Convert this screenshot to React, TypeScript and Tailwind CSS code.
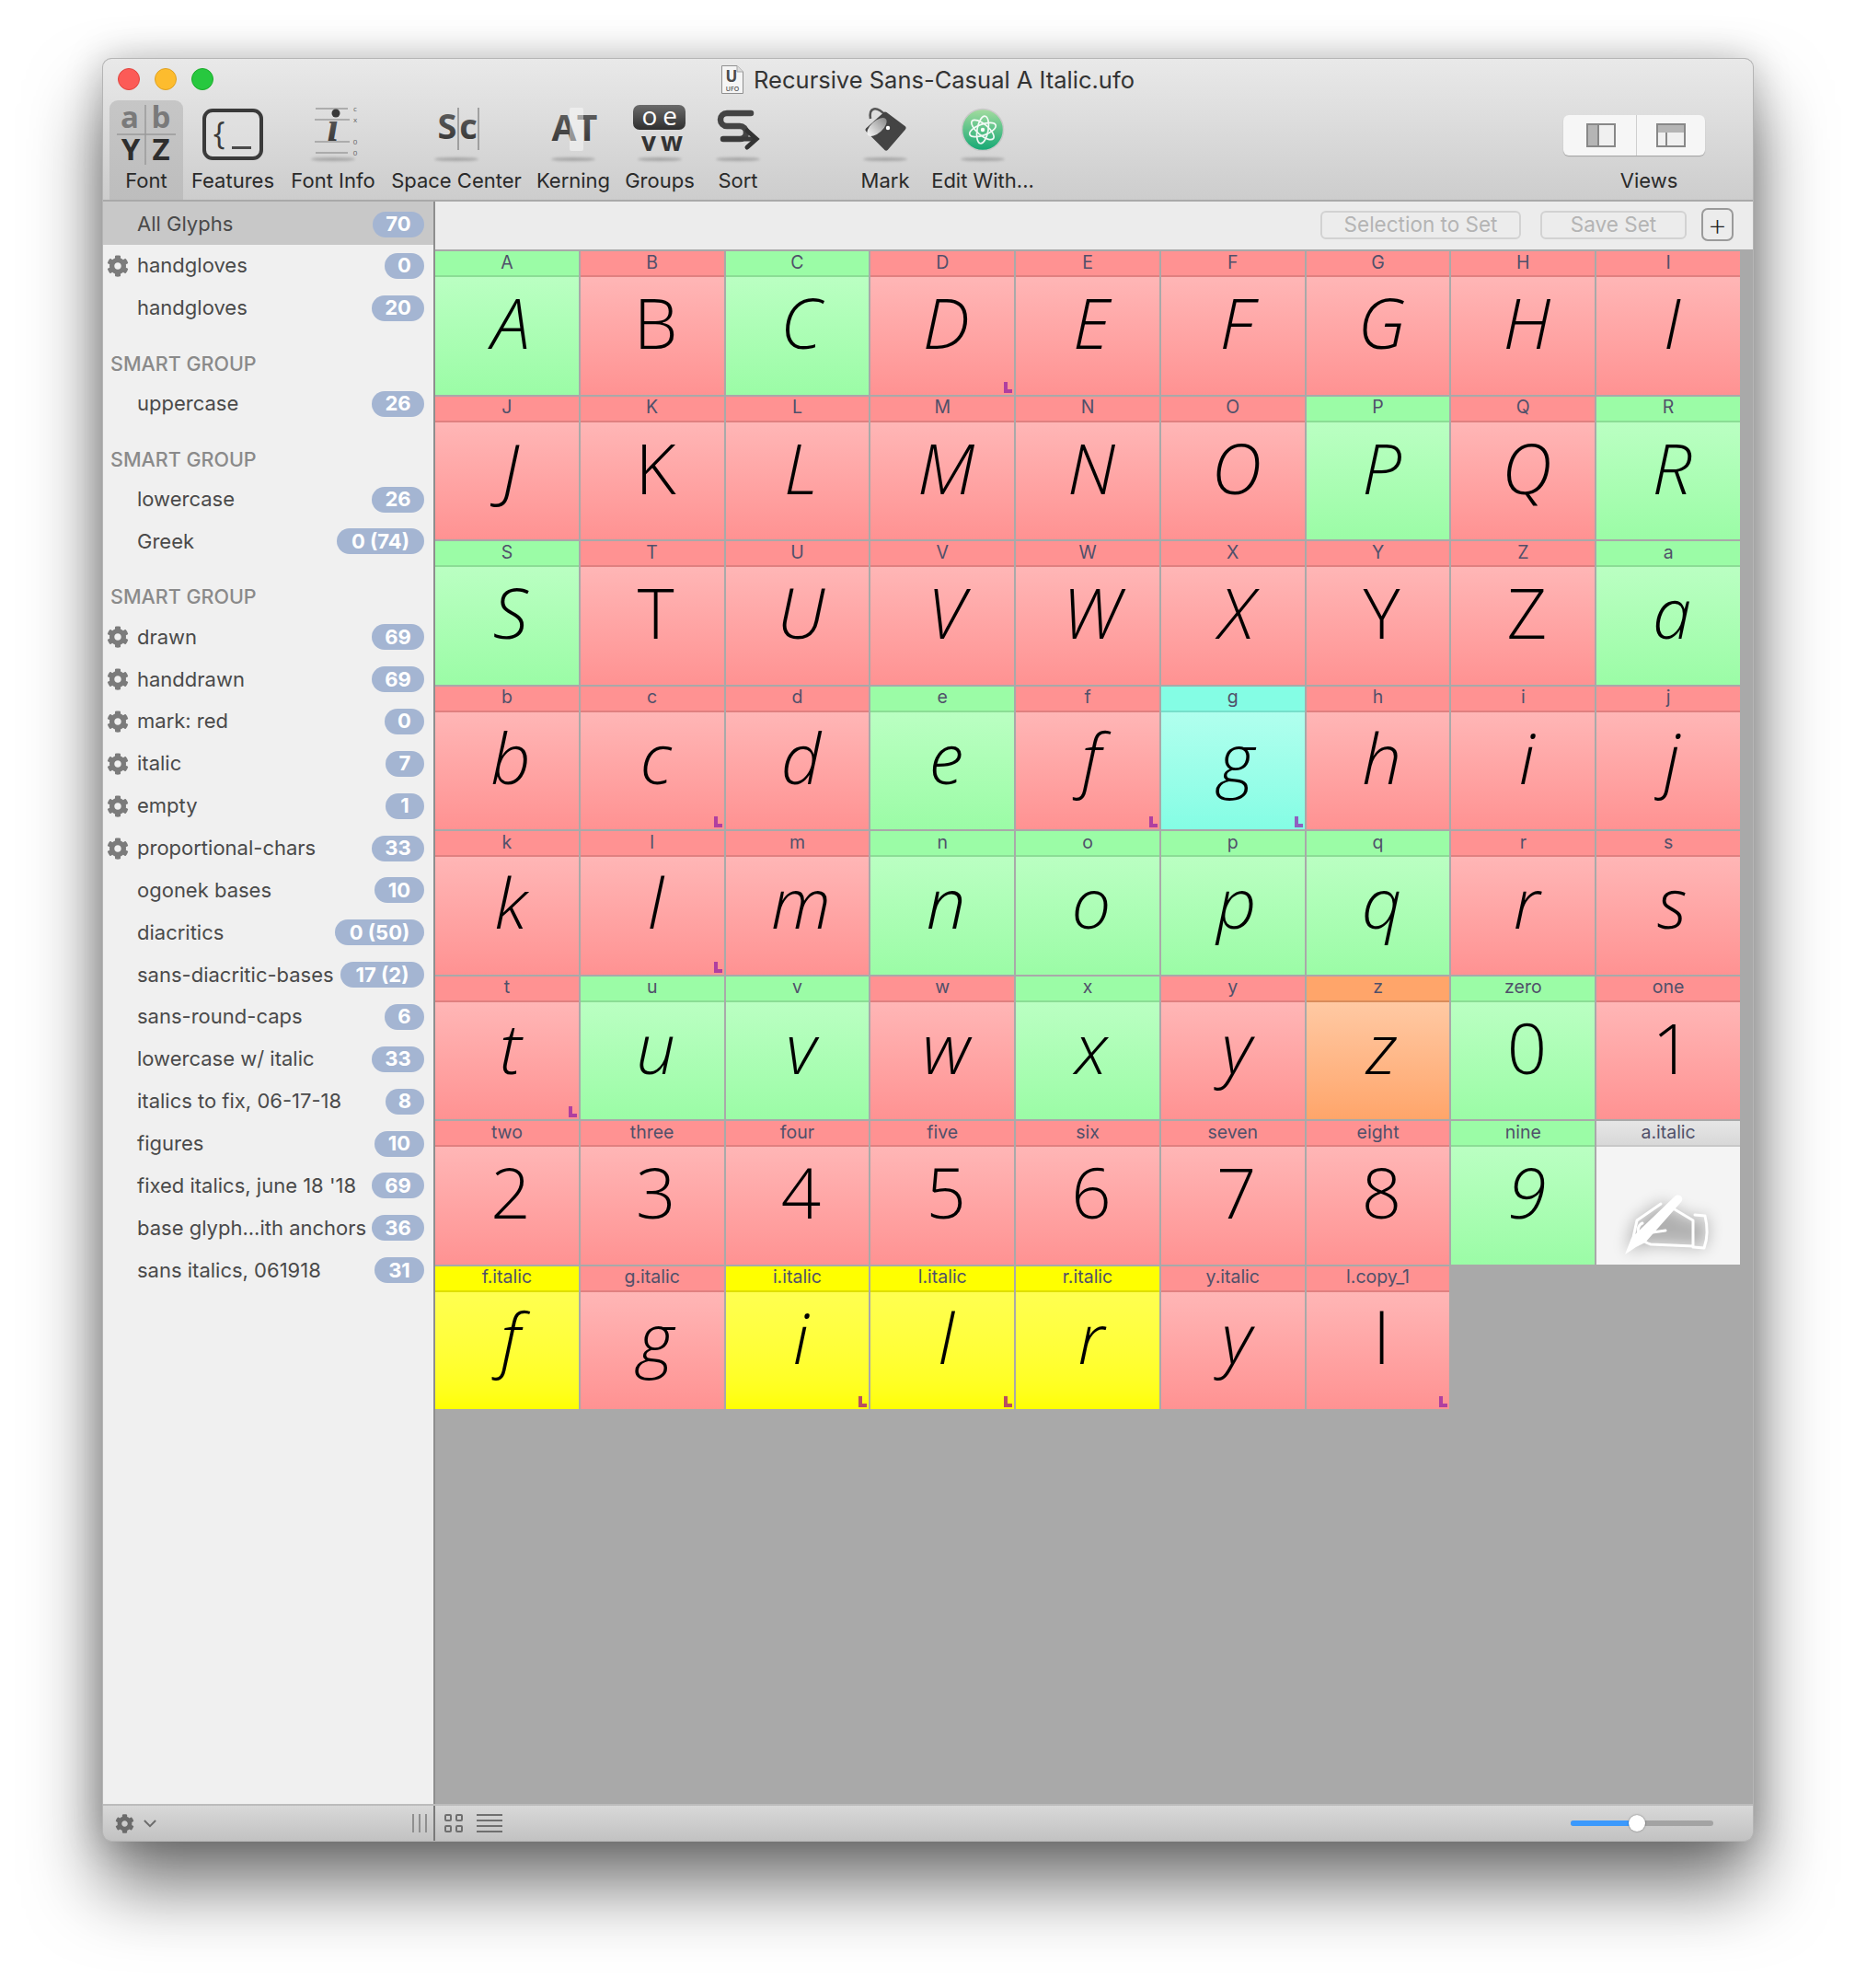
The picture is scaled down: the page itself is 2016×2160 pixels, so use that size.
import { FaCog } from "react-icons/fa";

type Mark = "red" | "green" | "cyan" | "orange" | "yellow" | "empty";

type Glyph = {
  name: string;
  char?: string;
  mark: Mark;
  upright?: boolean;
  corner?: boolean;
};

const g = (
  name: string,
  mark: Mark = "red",
  opts: { char?: string; upright?: boolean; corner?: boolean } = {}
): Glyph => ({ name, char: opts.char ?? name, mark, upright: opts.upright, corner: opts.corner });

const glyphs: Glyph[] = [
  g("A", "green"), g("B", "red", { upright: true }), g("C", "green"), g("D", "red", { corner: true }), g("E"), g("F"), g("G"), g("H"), g("I"),
  g("J"), g("K", "red", { upright: true }), g("L"), g("M"), g("N"), g("O"), g("P", "green"), g("Q"), g("R", "green"),
  g("S", "green"), g("T", "red", { upright: true }), g("U"), g("V"), g("W"), g("X"), g("Y", "red", { upright: true }), g("Z", "red", { upright: true }), g("a", "green"),
  g("b"), g("c", "red", { corner: true }), g("d"), g("e", "green"), g("f", "red", { corner: true }), g("g", "cyan", { corner: true }), g("h"), g("i"), g("j"),
  g("k"), g("l", "red", { corner: true }), g("m"), g("n", "green"), g("o", "green"), g("p", "green"), g("q", "green"), g("r"), g("s"),
  g("t", "red", { corner: true }), g("u", "green"), g("v", "green"), g("w"), g("x", "green"), g("y"), g("z", "orange"), g("zero", "green", { char: "0", upright: true }), g("one", "red", { char: "1", upright: true }),
  g("two", "red", { char: "2", upright: true }), g("three", "red", { char: "3", upright: true }), g("four", "red", { char: "4", upright: true }), g("five", "red", { char: "5", upright: true }), g("six", "red", { char: "6", upright: true }), g("seven", "red", { char: "7", upright: true }), g("eight", "red", { char: "8", upright: true }), g("nine", "green", { char: "9" }), g("a.italic", "empty", { char: "" }),
  g("f.italic", "yellow", { char: "f" }), g("g.italic", "red", { char: "g" }), g("i.italic", "yellow", { char: "i", corner: true }), g("l.italic", "yellow", { char: "l", corner: true }), g("r.italic", "yellow", { char: "r" }), g("y.italic", "red", { char: "y" }), g("l.copy_1", "red", { char: "l", upright: true, corner: true }),
];

const labelColor: Record<Mark, string> = {
  red: "bg-[#ff9292] border-[#e08080]",
  green: "bg-[#9bfca6] border-[#8bdd95]",
  cyan: "bg-[#84fde4] border-[#77dfcb]",
  orange: "bg-[#ffa56a] border-[#d98c5a]",
  yellow: "bg-[#ffff00] border-[#dfdf00]",
  empty: "bg-gradient-to-b from-[#e6e6e6] to-[#d8d8d8] border-[#c8c8c8]",
};

const bodyColor: Record<Mark, string> = {
  red: "bg-gradient-to-b from-[#ffb6b6] to-[#ff9292]",
  green: "bg-gradient-to-b from-[#baffc2] to-[#9bfca6]",
  cyan: "bg-gradient-to-b from-[#b0ffee] to-[#84fde4]",
  orange: "bg-gradient-to-b from-[#ffc9a3] to-[#ffa56a]",
  yellow: "bg-gradient-to-b from-[#ffff50] to-[#ffff00]",
  empty: "bg-[#f4f4f4]",
};

const cornerColor: Record<Mark, string> = {
  red: "border-[#b03fa0]",
  green: "border-[#8f5fc0]",
  cyan: "border-[#8f5fc0]",
  orange: "border-[#b03fa0]",
  yellow: "border-[#b84f60]",
  empty: "border-[#b03fa0]",
};

type SideRow =
  | { kind: "head" }
  | { label: string; badge: string; w: string; gear?: boolean; kind?: undefined };

const sideRows: SideRow[] = [
  { label: "handgloves", badge: "0", w: "w-[43px]", gear: true },
  { label: "handgloves", badge: "20", w: "w-[57px]" },
  { kind: "head" },
  { label: "uppercase", badge: "26", w: "w-[57px]" },
  { kind: "head" },
  { label: "lowercase", badge: "26", w: "w-[57px]" },
  { label: "Greek", badge: "0 (74)", w: "w-[95px]" },
  { kind: "head" },
  { label: "drawn", badge: "69", w: "w-[57px]", gear: true },
  { label: "handdrawn", badge: "69", w: "w-[57px]", gear: true },
  { label: "mark: red", badge: "0", w: "w-[43px]", gear: true },
  { label: "italic", badge: "7", w: "w-[42px]", gear: true },
  { label: "empty", badge: "1", w: "w-[42px]", gear: true },
  { label: "proportional-chars", badge: "33", w: "w-[57px]", gear: true },
  { label: "ogonek bases", badge: "10", w: "w-[54px]" },
  { label: "diacritics", badge: "0 (50)", w: "w-[97px]" },
  { label: "sans-diacritic-bases", badge: "17 (2)", w: "w-[91px]" },
  { label: "sans-round-caps", badge: "6", w: "w-[43px]" },
  { label: "lowercase w/ italic", badge: "33", w: "w-[57px]" },
  { label: "italics to fix, 06-17-18", badge: "8", w: "w-[42px]" },
  { label: "figures", badge: "10", w: "w-[54px]" },
  { label: "fixed italics, june 18 '18", badge: "69", w: "w-[57px]" },
  { label: "base glyph...ith anchors", badge: "36", w: "w-[57px]" },
  { label: "sans italics, 061918", badge: "31", w: "w-[54px]" },
];

const iconFont = "'Open Sans', sans-serif";

function Shade({ x = 40 }: { x?: number }) {
  return <ellipse cx={x} cy={64} rx={24} ry={2} fill="#000" opacity={0.22} filter="url(#soft)" />;
}

function Defs() {
  return (
    <svg width="0" height="0" className="absolute">
      <defs>
        <filter id="soft" x="-30%" y="-200%" width="160%" height="500%">
          <feGaussianBlur stdDeviation="1.4" />
        </filter>
        <filter id="wide" x="-40%" y="-40%" width="180%" height="180%">
          <feGaussianBlur stdDeviation="9" />
        </filter>
        <linearGradient id="ink" x1="0" y1="0" x2="0" y2="1">
          <stop offset="0" stopColor="#6b6b6b" />
          <stop offset="1" stopColor="#2e2e2e" />
        </linearGradient>
        <linearGradient id="atom" x1="0" y1="0" x2="0" y2="1">
          <stop offset="0" stopColor="#a4dc9f" />
          <stop offset="1" stopColor="#14a874" />
        </linearGradient>
        <linearGradient id="pail" x1="0" y1="0" x2="1" y2="0">
          <stop offset="0" stopColor="#f4f4f4" />
          <stop offset="1" stopColor="#8c8c8c" />
        </linearGradient>
      </defs>
    </svg>
  );
}

function Ico({ children }: { children: React.ReactNode }) {
  return (
    <svg viewBox="0 0 80 72" className="h-[72px] w-[80px] shrink-0 overflow-visible" style={{ fontFamily: iconFont }}>
      {children}
    </svg>
  );
}

function FontIcon() {
  return (
    <Ico>
      <path d="M39 5V70M8 37H72" stroke="#9a9a9a" strokeWidth="1.5" />
      <text x="22" y="30" textAnchor="middle" fontSize="33" fontWeight="700" fill="#7a7a7a">a</text>
      <text x="56" y="30" textAnchor="middle" fontSize="33" fontWeight="700" fill="#7a7a7a">b</text>
      <text x="23" y="65" textAnchor="middle" fontSize="33" fontWeight="700" fill="#2e2e2e">Y</text>
      <text x="56" y="65" textAnchor="middle" fontSize="33" fontWeight="700" fill="#2e2e2e">Z</text>
    </Ico>
  );
}

function FeaturesIcon() {
  return (
    <Ico>
      <rect x="9" y="11" width="62" height="52" rx="9" fill="#e4e4e4" fillOpacity="0.5" stroke="#3a3a3a" strokeWidth="4" />
      <text x="25" y="48" textAnchor="middle" fontSize="34" fill="#3a3a3a">{"{"}</text>
      <rect x="39" y="50" width="21" height="3" fill="#4a4a4a" />
    </Ico>
  );
}

function InfoIcon() {
  return (
    <Ico>
      <path d="M21 9H56M20 21H58M20 45H58M21 57H56" stroke="#9d9d9d" strokeWidth="1.5" />
      <circle cx="43" cy="14" r="4.5" fill="#3a3a3a" />
      <text x="40" y="44" textAnchor="middle" fontSize="46" fontWeight="700" fontStyle="italic" fill="url(#ink)" style={{ fontFamily: "'Liberation Serif', serif" }}>ı</text>
      <text x="64" y="12" textAnchor="middle" fontSize="8" fill="#666">c</text>
      <text x="64" y="24" textAnchor="middle" fontSize="8" fill="#666">x</text>
      <text x="64" y="48" textAnchor="middle" fontSize="8" fill="#666">0</text>
      <text x="64" y="60" textAnchor="middle" fontSize="8" fill="#666">0</text>
      <Shade />
    </Ico>
  );
}

function SpaceIcon() {
  return (
    <Ico>
      <text x="30" y="42" textAnchor="middle" fontSize="38" fontWeight="700" fill="url(#ink)">S</text>
      <text x="53" y="42" textAnchor="middle" fontSize="38" fontWeight="700" fill="url(#ink)">c</text>
      <path d="M42 8V54M64 8V54" stroke="#8c8c8c" strokeWidth="1.5" />
      <Shade />
    </Ico>
  );
}

function KerningIcon() {
  return (
    <Ico>
      <text x="30" y="44" textAnchor="middle" fontSize="39" fontWeight="700" fill="url(#ink)">A</text>
      <text x="55" y="44" textAnchor="middle" fontSize="39" fontWeight="700" fill="url(#ink)">T</text>
      <rect x="36" y="8" width="15" height="47" rx="2" fill="#fff" opacity="0.45" />
      <Shade />
    </Ico>
  );
}

function GroupsIcon() {
  return (
    <Ico>
      <rect x="11" y="5" width="57" height="27" rx="7" fill="url(#ink)" />
      <text x="29" y="27" textAnchor="middle" fontSize="28" fill="#fff">o</text>
      <text x="51" y="27" textAnchor="middle" fontSize="28" fill="#fff">e</text>
      <text x="28" y="55" textAnchor="middle" fontSize="28" fontWeight="700" fill="#333">v</text>
      <text x="53" y="55" textAnchor="middle" fontSize="28" fontWeight="700" fill="#333">w</text>
      <Shade />
    </Ico>
  );
}

function SortIcon() {
  return (
    <Ico>
      <path
        d="M54 14H28A7 7 0 0 0 28 28H42A7 7 0 0 1 42 42H24"
        fill="none"
        stroke="#444"
        strokeWidth="6.5"
        strokeLinecap="round"
      />
      <path d="M24 42H56" fill="none" stroke="#3a3a3a" strokeWidth="5" strokeLinecap="round" />
      <path d="M50 33L60 42L50 51" fill="none" stroke="#333" strokeWidth="5" strokeLinecap="round" />
      <Shade />
    </Ico>
  );
}

function MarkIcon() {
  return (
    <Ico>
      <path d="M24 20C22 8 30 5 41 17" fill="none" stroke="#555" strokeWidth="2.5" />
      <path d="M21 32L40 15L60 30L41 52Z" fill="#444" stroke="#444" strokeWidth="5" strokeLinejoin="round" />
      <ellipse cx="31" cy="29" rx="13" ry="6.5" transform="rotate(-42 31 29)" fill="url(#pail)" />
      <circle cx="43" cy="30" r="2.2" fill="#fff" />
      <Shade />
    </Ico>
  );
}

function AtomIcon() {
  return (
    <Ico>
      <circle cx="40" cy="32" r="22.5" fill="url(#atom)" stroke="#c9c9c9" strokeWidth="1.5" />
      <g fill="none" stroke="#fff" strokeWidth="1.7" opacity="0.92">
        <ellipse cx="40" cy="32" rx="15" ry="6" transform="rotate(-20 40 32)" />
        <ellipse cx="40" cy="32" rx="15" ry="6" transform="rotate(40 40 32)" />
        <ellipse cx="40" cy="32" rx="15" ry="6" transform="rotate(100 40 32)" />
      </g>
      <circle cx="40" cy="32" r="2.2" fill="#fff" />
      <Shade />
    </Ico>
  );
}

function UfoFile() {
  return (
    <svg viewBox="0 0 24 31" className="mr-[11px] h-[31px] w-[24px] shrink-0 overflow-visible" style={{ fontFamily: iconFont }}>
      <path d="M.5.5H17L23.5 7V30.5H.5Z" fill="#f5f5f5" stroke="#8f8f8f" />
      <path d="M17 .5V7H23.5" fill="#dcdcdc" stroke="#a5a5a5" />
      <text x="11" y="18" textAnchor="middle" fontSize="17" fontWeight="700" fill="#4a4a4a">U</text>
      <text x="12" y="28" textAnchor="middle" fontSize="7" fontWeight="600" fill="#555">UFO</text>
    </svg>
  );
}

function ToolItem({ label, w, active, children }: { label: string; w: string; active?: boolean; children: React.ReactNode }) {
  return (
    <div className={`flex h-full shrink-0 flex-col items-center rounded-t-[9px] ${w} ${active ? "bg-gradient-to-b from-[#c6c6c6] to-[#bdbdbd]" : ""}`}>
      <div className="flex h-[72px] items-center justify-center">{children}</div>
      <span className="mt-[2px] whitespace-nowrap text-[22px] leading-[26px] text-[#2a2a2a]">{label}</span>
    </div>
  );
}

function PenHand() {
  const d =
    "M8 66L17 34L45 14L60 21L80 32L94 27C96 40 96 52 92 63L80 61L33 59L8 66Z";
  return (
    <svg viewBox="0 0 100 80" className="absolute left-[25px] top-[47px] h-[80px] w-[100px] overflow-visible">
      <path d={d} fill="#000" opacity="0.28" filter="url(#wide)" />
      <g fill="none" stroke="#fff" strokeWidth="3" strokeLinejoin="round" strokeLinecap="round">
        <path d="M14 56L19 33L45 15M60 21L80 33L80 61L34 59C30 58 27 56 25 53" />
        <path d="M82 27L93 28C96 40 96 52 92 63L80 62" />
        <path d="M24 52C18 46 20 38 25 36M36 46L50 44" />
      </g>
      <path d="M6 70L13 52L60 7C65 3 71 8 67 13L28 57L18 62Z" fill="#fff" />
    </svg>
  );
}

function Cell({ glyph }: { glyph: Glyph }) {
  return (
    <div className="flex h-[155.5px] min-w-0 flex-col">
      <div className={`flex h-[28px] shrink-0 items-center justify-center border-b-2 pb-px text-[19.5px] leading-none text-[#50506a] ${labelColor[glyph.mark]}`}>
        {glyph.name}
      </div>
      <div className={`relative flex-1 ${bodyColor[glyph.mark]}`}>
        {glyph.char ? (
          <span
            className={`absolute inset-x-0 top-0 h-[98px] pl-[8px] text-center text-[76px] font-light leading-[98px] text-black ${glyph.upright ? "" : "italic"}`}
            style={{ fontFamily: "'Open Sans', sans-serif" }}
          >
            {glyph.char}
          </span>
        ) : (
          <PenHand />
        )}
        {glyph.corner && (
          <span className={`absolute bottom-[2px] right-[2px] h-[12px] w-[9px] border-b-[4px] border-l-[4px] ${cornerColor[glyph.mark]}`} />
        )}
      </div>
    </div>
  );
}

function Sidebar() {
  return (
    <aside className="flex w-[361px] shrink-0 flex-col border-r-2 border-[#8e8e8e] bg-[#f0f0f0]">
      <div className="flex h-[47px] shrink-0 items-center bg-[#c8c8c8] pl-[37px] pr-[10px] pt-[2px] text-[#4a4a4a]">
        <span className="flex-1 text-[22px]">All Glyphs</span>
        <span className="flex h-[28px] w-[56px] items-center justify-center rounded-full bg-[#a4b5d2] text-[22px] font-bold text-white">70</span>
      </div>
      {sideRows.map((row, i) =>
        row.kind === "head" ? (
          <div key={i} className="flex h-[58px] shrink-0 items-end pb-[9px] pl-[8px] text-[21.5px] font-medium leading-[24px] text-[#8a8a8a]">
            SMART GROUP
          </div>
        ) : (
          <div key={i} className="relative flex h-[45.87px] shrink-0 items-center pl-[37px] pr-[10px] text-[#4a4a4a]">
            {row.gear && <FaCog className="absolute left-[4px] top-[11px] h-[24px] w-[24px] text-[#7b7b7b]" />}
            <span className="flex-1 whitespace-nowrap text-[22px]">{row.label}</span>
            <span className={`flex h-[28px] items-center justify-center rounded-full bg-[#a4b5d2] text-[22px] font-bold text-white ${row.w}`}>{row.badge}</span>
          </div>
        )
      )}
    </aside>
  );
}

export default function App() {
  return (
    <div className="h-[2160px] w-[2016px] overflow-hidden bg-white pl-[111px] pt-[63px]" style={{ fontFamily: "Inter, sans-serif" }}>
      <Defs />
      <div className="flex h-[1938px] w-[1795px] flex-col overflow-hidden rounded-[10px] border border-[#b5b5b5] bg-[#a9a9a9] shadow-[0_48px_80px_rgba(0,0,0,0.55),0_0_40px_rgba(0,0,0,0.22)]">
        <header className="h-[155px] shrink-0 border-b-2 border-[#a9a9a9] bg-gradient-to-b from-[#e9e9e9] to-[#cdcdcd]">
          <div className="relative flex h-[45px] items-center justify-center">
            <div className="absolute left-[16px] top-[10px] flex gap-[16px]">
              <span className="h-[24px] w-[24px] rounded-full border border-[#e0443e] bg-[#fc5b57]" />
              <span className="h-[24px] w-[24px] rounded-full border border-[#dea123] bg-[#fdbc2e]" />
              <span className="h-[24px] w-[24px] rounded-full border border-[#1aab29] bg-[#27c83f]" />
            </div>
            <UfoFile />
            <span className="text-[25.5px] leading-[30px] text-[#333]">Recursive Sans-Casual A Italic.ufo</span>
          </div>
          <div className="flex h-[108px] pl-[7px]">
            <ToolItem label="Font" w="w-[80px]" active><FontIcon /></ToolItem>
            <ToolItem label="Features" w="w-[108px]"><FeaturesIcon /></ToolItem>
            <ToolItem label="Font Info" w="w-[110px]"><InfoIcon /></ToolItem>
            <ToolItem label="Space Center" w="w-[158px]"><SpaceIcon /></ToolItem>
            <ToolItem label="Kerning" w="w-[96px]"><KerningIcon /></ToolItem>
            <ToolItem label="Groups" w="w-[92px]"><GroupsIcon /></ToolItem>
            <ToolItem label="Sort" w="w-[78px]"><SortIcon /></ToolItem>
            <div className="w-[79px] shrink-0" />
            <ToolItem label="Mark" w="w-[84px]"><MarkIcon /></ToolItem>
            <ToolItem label="Edit With..." w="w-[128px]"><AtomIcon /></ToolItem>
            <div className="flex-1" />
            <div className="mr-[12px] flex w-[202px] shrink-0 flex-col items-center">
              <div className="mt-[16px] flex h-[44px] w-[154px] -translate-x-[16px] rounded-[6px] bg-[#f6f6f6] shadow-[0_1px_1px_rgba(0,0,0,0.25)]">
                <div className="flex flex-1 items-center justify-center border-r border-[#cfcfcf] pl-[4px]">
                  <div className="flex h-[26px] w-[32px] border-2 border-[#888] bg-[#f0f0f0]">
                    <div className="h-full w-[10px] bg-[#b5b5b5]" />
                    <div className="h-full w-[2px] bg-[#888]" />
                  </div>
                </div>
                <div className="flex flex-1 items-center justify-center">
                  <div className="flex h-[26px] w-[32px] flex-col border-2 border-[#888] bg-[#f0f0f0]">
                    <div className="h-[8px] w-full shrink-0 bg-[#b5b5b5]" />
                    <div className="ml-[8px] h-full w-[2px] bg-[#888]" />
                  </div>
                </div>
              </div>
              <span className="mt-[14px] text-[22px] leading-[26px] text-[#2a2a2a]">Views</span>
            </div>
          </div>
        </header>

        <div className="flex min-h-0 flex-1">
          <Sidebar />
          <div className="flex min-w-0 flex-1 flex-col">
            <div className="flex h-[52px] shrink-0 items-center justify-end gap-[21px] bg-[#ececec] pb-[2px] pr-[21px]">
              <span className="flex h-[31px] w-[218px] items-center justify-center rounded-[6px] border-2 border-[#d2d2d2] text-[22.5px] text-[#b4b4b4]">Selection to Set</span>
              <div className="flex items-center gap-[16px]">
                <span className="flex h-[31px] w-[159px] items-center justify-center rounded-[6px] border-2 border-[#d2d2d2] text-[22.5px] text-[#b4b4b4]">Save Set</span>
                <span className="flex h-[36px] w-[35px] items-center justify-center rounded-[7px] border-2 border-[#9a9a9a] text-[34px] font-extralight leading-none text-[#222]">+</span>
              </div>
            </div>
            <div className="min-h-0 flex-1 pt-[2px]">
              <div className="grid w-[1418px] grid-cols-9 gap-[2px]">
                {glyphs.map((glyph) => (
                  <Cell key={glyph.name} glyph={glyph} />
                ))}
              </div>
            </div>
          </div>
        </div>

        <footer className="flex h-[40px] shrink-0 border-t-2 border-[#bcbcbc] bg-gradient-to-b from-[#d8d8d8] to-[#c2c2c2]">
          <div className="flex w-[361px] shrink-0 items-center border-r-2 border-[#7a7a7a] pl-[13px] pr-[7px]">
            <FaCog className="h-[21px] w-[21px] text-[#6b6b6b]" />
            <svg viewBox="0 0 16 10" className="ml-[10px] h-[9px] w-[14px]"><path d="M1 1L8 8L15 1" fill="none" stroke="#6b6b6b" strokeWidth="2.2" /></svg>
            <div className="ml-auto flex h-[20px] gap-[5px]">
              <div className="w-[2px] bg-[#8f8f8f]" />
              <div className="w-[2px] bg-[#8f8f8f]" />
              <div className="w-[2px] bg-[#8f8f8f]" />
            </div>
          </div>
          <div className="flex flex-1 items-center pl-[10px]">
            <div className="grid grid-cols-2 gap-[4px]">
              <div className="h-[8px] w-[8px] rounded-[2px] border-2 border-[#6f6f6f]" />
              <div className="h-[8px] w-[8px] rounded-[2px] border-2 border-[#6f6f6f]" />
              <div className="h-[8px] w-[8px] rounded-[2px] border-2 border-[#6f6f6f]" />
              <div className="h-[8px] w-[8px] rounded-[2px] border-2 border-[#6f6f6f]" />
            </div>
            <div className="ml-[15px] flex h-[21px] w-[28px] flex-col justify-between">
              <div className="h-[2px] bg-[#6f6f6f]" />
              <div className="h-[2px] bg-[#6f6f6f]" />
              <div className="h-[2px] bg-[#6f6f6f]" />
              <div className="h-[2px] bg-[#6f6f6f]" />
            </div>
            <div className="relative ml-auto mr-[43px] flex h-[6px] w-[155px] rounded-full bg-[#a3a3a3]">
              <div className="h-full w-[68px] rounded-l-full bg-[#3b99fc]" />
              <span className="absolute left-[63px] top-[-6px] h-[18px] w-[18px] rounded-full bg-white shadow-[0_0_2px_rgba(0,0,0,0.5)]" />
            </div>
          </div>
        </footer>
      </div>
    </div>
  );
}
